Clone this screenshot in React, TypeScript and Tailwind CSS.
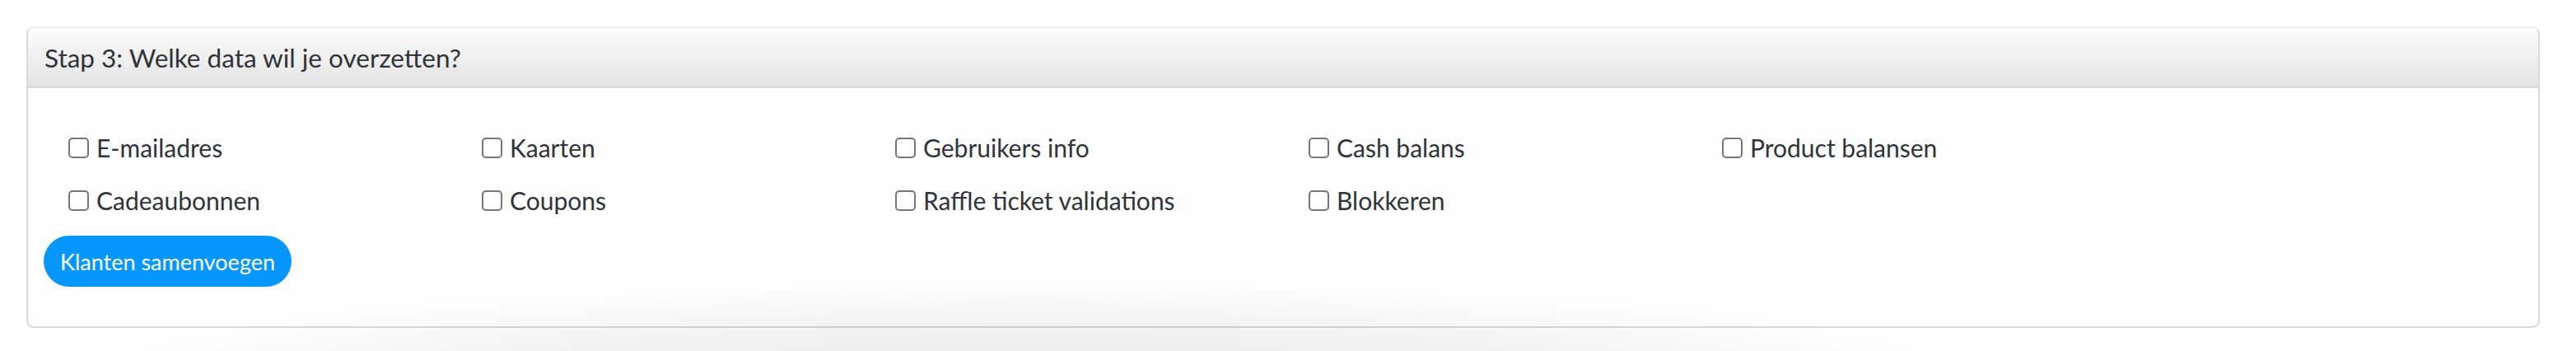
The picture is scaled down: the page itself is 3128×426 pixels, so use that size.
import React from "react";

const row1 = ["E-mailadres", "Kaarten", "Gebruikers info", "Cash balans", "Product balansen"];
const row2 = ["Cadeaubonnen", "Coupons", "Raffle ticket validations", "Blokkeren"];

function Item({ label }: { label: string }) {
  return (
    <label className="flex h-[64px] items-center gap-[9px]">
      <input
        type="checkbox"
        className="m-0 h-[25px] w-[25px] shrink-0 appearance-none rounded-[5px] border-2 border-[#767676] bg-white"
      />
      <span className="text-[30px] leading-none text-[#30343a]">{label}</span>
    </label>
  );
}

export default function App() {
  return (
    <div
      className="relative h-[426px] w-[3128px] overflow-hidden bg-white pt-[32px] pl-[32px]"
      style={{ fontFamily: "Lato, 'Open Sans', sans-serif" }}
    >
      <div className="relative w-[3052px] rounded-[9px] border-2 border-[#d9d9d9] border-t-[#ececec] bg-[#fefefe]">
        <div className="flex h-[73px] items-center rounded-t-[8px] border-b-2 border-[#d8d8d8] bg-gradient-to-b from-[#fcfcfc] to-[#e3e3e3] px-[20px] pt-[3px]">
          <span className="text-[31.5px] leading-none text-[#30343a]">Stap 3: Welke data wil je overzetten?</span>
        </div>
        <div className="px-[19px] pt-[40px] pb-[48px]">
          <div className="grid grid-cols-[repeat(6,502px)] pl-[30px]">
            {row1.map((l) => (
              <Item key={l} label={l} />
            ))}
            <div />
            {row2.map((l) => (
              <Item key={l} label={l} />
            ))}
          </div>
          <button className="mt-[11px] flex h-[62px] items-center rounded-full bg-[#0597fd] px-[20px] text-[27px] leading-none text-white">
            Klanten samenvoegen
          </button>
        </div>
      </div>
      <div
        className="pointer-events-none absolute left-[20px] top-[340px] h-[200px] w-[2460px]"
        style={{ background: "radial-gradient(ellipse at 50% 65%, rgba(0,0,0,0.09) 0%, rgba(0,0,0,0.05) 40%, rgba(0,0,0,0) 70%)" }}
      />
    </div>
  );
}
